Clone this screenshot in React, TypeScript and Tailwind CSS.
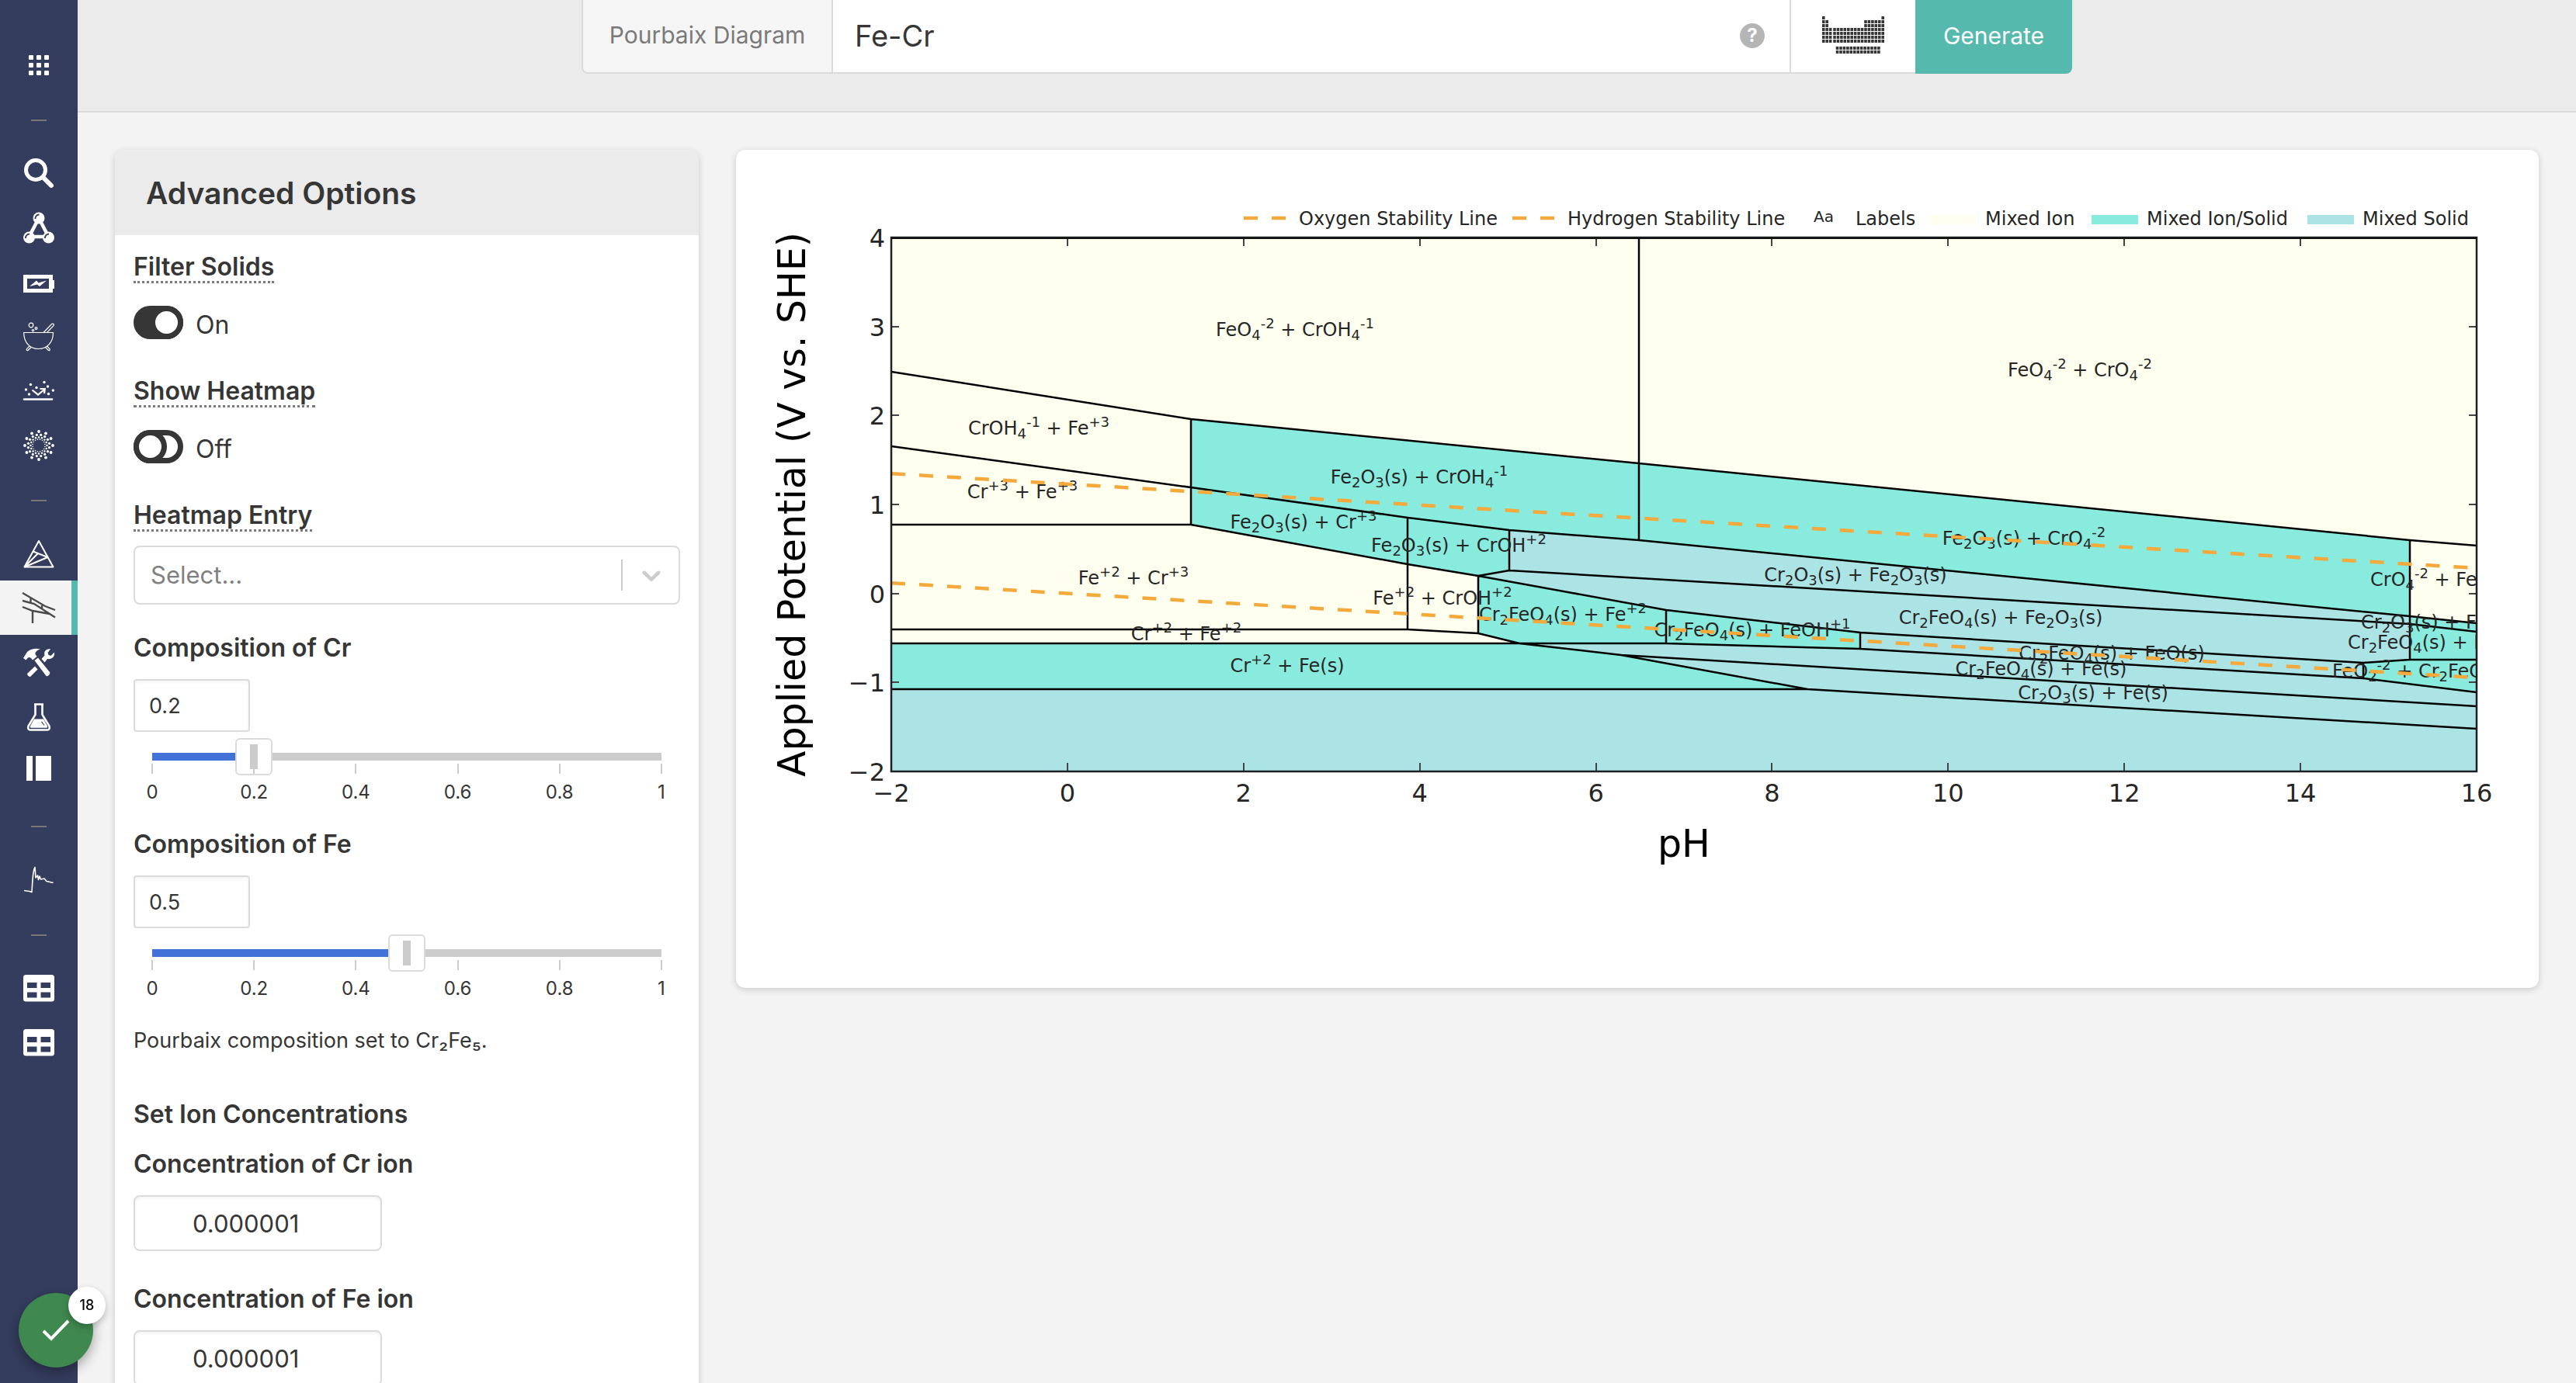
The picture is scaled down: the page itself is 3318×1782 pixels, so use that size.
import React, { useState } from "react";

/* ---------- sidebar icons (40 x 40 box) ---------- */

const svgProps = {
  width: 40,
  height: 40,
  viewBox: "0 0 40 40",
  fill: "none",
  stroke: "currentColor",
  "aria-hidden": true,
  overflow: "visible",
} as const;

const GridIcon = () => (
  <svg {...svgProps} stroke="none" fill="currentColor">
    {[0, 1, 2].map((r) =>
      [0, 1, 2].map((c) => <rect key={`${r}${c}`} x={7 + c * 10} y={8 + r * 10} width="6" height="6" rx="1" />)
    )}
  </svg>
);

const SearchIcon = () => (
  <svg {...svgProps}>
    <circle cx="16" cy="16" r="12.500" strokeWidth="5" />
    <path d="M25.500 25.500 L36 36" strokeWidth="6" strokeLinecap="round" />
  </svg>
);

const MoleculeIcon = () => (
  <svg {...svgProps}>
    <path d="M20 8 L7.500 32 H32.500 Z" strokeWidth="4.500" />
    <circle cx="20" cy="8" r="7.500" fill="currentColor" stroke="none" />
    <circle cx="7.500" cy="33" r="7.500" fill="currentColor" stroke="none" />
    <circle cx="32.500" cy="33" r="7.500" fill="currentColor" stroke="none" />
    <path d="M15.500 9 a5 5 0 0 1 5 -5.500 M3 34 a5 5 0 0 1 5 -5.500 M28 34 a5 5 0 0 1 5 -5.500" stroke="#353d5e" strokeWidth="1.800" />
  </svg>
);

const BatteryIcon = () => (
  <svg {...svgProps}>
    <rect x="2.500" y="13.500" width="33" height="18" strokeWidth="5" />
    <rect x="37" y="18" width="3" height="11" fill="currentColor" stroke="none" />
    <path d="M8 26 L17 18.500 L19.500 21.500 L30 18.500 L21 26 L18 23.500 Z" fill="currentColor" stroke="none" />
  </svg>
);

const MortarIcon = () => (
  <svg {...svgProps} strokeWidth="1.200">
    <path d="M.7 15.500 H38.500 C38.500 28 31 36.500 19.500 36.500 C8 36.500 .7 28 .7 15.500 Z" />
    <path d="M26 15.500 L36.500 4.500 C38 3.500 40.500 5 39 6.700 L30.500 15.500" />
    <path d="M8 33 L4.500 36.500 C3.500 38.500 5.500 39 6.500 38 L10 34.500 M30.500 33 L34 36.500 C35 38.500 33 39 32 38 L28.500 34.500" />
    <circle cx="10" cy="6" r="2.800" />
    <circle cx="16.500" cy="10" r="1.400" />
    <circle cx="12.500" cy="12.800" r="1.200" />
  </svg>
);

const ScatterIcon = () => (
  <svg {...svgProps}>
    {[[3.5, 19], [9.5, 12.5], [7.5, 25], [17, 16.5], [27, 9.5], [31.5, 15], [38.3, 20], [32.5, 24.5]].map(([x, y]) => (
      <circle key={x} cx={x} cy={y} r="1.700" fill="currentColor" stroke="none" />
    ))}
    <path d="M11.500 19.500 L19 25.500 L27 19" strokeWidth="2.200" />
    <path d="M21.500 18 H27.800 L27 24" strokeWidth="2.200" />
    <path d="M1 31.500 H37" strokeWidth="2.600" strokeLinecap="round" />
  </svg>
);

const RingIcon = () => {
  const rings = [
    { r: 18, n: 12, d: 1.9 },
    { r: 13.8, n: 16, d: 1.6 },
    { r: 10.5, n: 16, d: 1.2 },
    { r: 8, n: 16, d: 0.8 },
  ];
  return (
    <svg {...svgProps} fill="currentColor" stroke="none">
      {rings.map((g, k) =>
        Array.from({ length: g.n }, (_, i) => {
          const a = ((i + (k % 2) * 0.5) / g.n) * Math.PI * 2;
          return <circle key={`${k}-${i}`} cx={20 + g.r * Math.cos(a)} cy={21 + g.r * Math.sin(a)} r={g.d} />;
        })
      )}
    </svg>
  );
};

const PhaseIcon = () => (
  <svg {...svgProps} strokeWidth="2" strokeLinejoin="round">
    <path d="M20 4 L38.500 37.500 H1.500 Z" />
    <path d="M12.500 17.500 L31.500 25 M1.500 37.500 L19 20 M1.500 37.500 L31.500 25" />
  </svg>
);

const PourbaixIcon = () => (
  <svg {...svgProps} strokeWidth="2.400">
    <path d="M-1 1 L28 18 L41 23 M-1 11 L14 15 L41 32.500 M-1 19 L12 24 L34 28 M9.500 7 V14 M24 17 V21 M12 24 V40" />
  </svg>
);

const ToolsIcon = () => (
  <svg {...svgProps} viewBox="0 -1 40 40" fill="currentColor" stroke="none">
    <path d="M0 14 L5 6 C10 2 16 1 22 2.500 C17 4 15 6.500 15.500 9 L17.500 12 L12 16.500 C10 13 7 12 5 14.500 L3.500 16.500 Z" />
    <path d="M14.500 17 L19 13.500 L34 32 C35 34.500 32 38 29.500 37 Z" />
    <path d="M40 6.500 L35.500 11 L32.500 10 L31.500 7 L35 2.500 C29.500 1.500 26 5.500 27.500 10.500 L23.500 15 L27.500 19.500 L31 15 C36.500 16 41 12 40 6.500 Z" />
    <path d="M15 24.500 L5 34 C5 36 7 38 9 38 L18.500 28.500 Z" />
  </svg>
);

const FlaskIcon = () => (
  <svg {...svgProps} viewBox="0 -1 40 40" strokeWidth="2.600">
    <path d="M14 3.500 H26 M15.500 4 V17 L6.500 31.500 C5.500 35 7 36.500 9 36.500 H31 C33 36.500 34.500 35 33.500 31.500 L24.500 17 V4" />
    <path d="M14 22.500 H26 L31 31.500 C31.500 33 31 33.700 30 33.700 H10 C9 33.700 8.500 33 9 31.500 Z" fill="currentColor" stroke="none" />
    <path d="M23.500 26 L27 30.500" stroke="#353d5e" strokeWidth="1.200" />
  </svg>
);

const BookIcon = () => (
  <svg {...svgProps} fill="currentColor" stroke="none">
    <rect x="4" y="1" width="8" height="32" />
    <rect x="16" y="1" width="20" height="32" />
  </svg>
);

const SpectrumIcon = () => (
  <svg {...svgProps} strokeWidth="1.600" strokeLinejoin="round">
    <path d="M1 34.500 L8 35.500 L11 36.500 C12 22 12 9 15 4.500 L16 18 L18.500 15 L19.500 20.500 L21 16 L22.500 20 L27 19 L30 22.500 L38.500 24.500" />
  </svg>
);

const TableIcon = () => (
  <svg {...svgProps} fill="currentColor" stroke="none">
    <path
      fillRule="evenodd"
      d="M3.500 3 H36.500 Q40 3 40 6.500 V34 Q40 37.500 36.500 37.500 H3.500 Q0 37.500 0 34 V6.500 Q0 3 3.500 3 Z M5 13 V20 H17.500 V13 Z M22.500 13 V20 H35 V13 Z M5 25.500 V32.500 H17.500 V25.500 Z M22.500 25.500 V32.500 H35 V25.500 Z"
    />
  </svg>
);

type NavItem = { label: string; icon?: () => React.ReactElement; active?: boolean };

const nav: NavItem[] = [
  { label: "Apps", icon: GridIcon },
  { label: "" },
  { label: "Materials Explorer", icon: SearchIcon },
  { label: "Molecules Explorer", icon: MoleculeIcon },
  { label: "Battery Explorer", icon: BatteryIcon },
  { label: "Synthesis Explorer", icon: MortarIcon },
  { label: "Catalysis Explorer", icon: ScatterIcon },
  { label: "MOF Explorer", icon: RingIcon },
  { label: "" },
  { label: "Phase Diagram", icon: PhaseIcon },
  { label: "Pourbaix Diagram", icon: PourbaixIcon, active: true },
  { label: "Crystal Toolkit", icon: ToolsIcon },
  { label: "Reaction Calculator", icon: FlaskIcon },
  { label: "Interface Reactions", icon: BookIcon },
  { label: "" },
  { label: "X-ray Absorption Spectra", icon: SpectrumIcon },
  { label: "" },
  { label: "Contributed Data", icon: TableIcon },
  { label: "Contribution Projects", icon: TableIcon },
];

function Sidebar() {
  return (
    <nav aria-label="Apps" className="flex w-[100px] shrink-0 flex-col bg-[#353d5e] pt-12 text-white">
      {nav.map((item, i) =>
        item.icon ? (
          <a
            key={i}
            href="#"
            aria-label={item.label}
            className={
              item.active
                ? "flex h-[70px] items-center justify-center border-r-8 border-[#55b9ad] bg-[#f3f3f3] pl-2 text-[#4a4a4a]"
                : "flex h-[70px] items-center justify-center"
            }
          >
            <item.icon />
          </a>
        ) : (
          <div key={i} className="flex h-[70px] items-center justify-center pt-1">
            <span className="h-0.5 w-5 bg-[#777777]" />
          </div>
        )
      )}
    </nav>
  );
}

/* ---------- search bar ---------- */

function PeriodicIcon() {
  const cells: [number, number][] = [];
  for (let r = 0; r < 7; r++)
    for (let c = 0; c < 18; c++) {
      const filled = r === 0 ? c === 0 || c === 17 : r < 3 ? c < 2 || c > 11 : true;
      if (filled) cells.push([c < 3 ? c * 5 : c * 5 + 1, r * 5]);
    }
  for (let c = 4; c < 17; c++) cells.push([c * 5, 39], [c * 5, 44]);
  return (
    <svg width="80" height="48" viewBox="0 0 90 48" preserveAspectRatio="none" fill="#363636" aria-hidden="true">
      {cells.map(([x, y]) => (
        <rect key={`${x}-${y}`} x={x} y={y} width="4" height="4" />
      ))}
    </svg>
  );
}

function SearchBar() {
  return (
    <header className="flex h-[145px] shrink-0 items-start justify-center border-b-2 border-[#dbdbdb] bg-[#ebebeb]">
      <form className="flex h-[95px] w-full max-w-[1920px]" onSubmit={(e) => e.preventDefault()}>
        <label
          htmlFor="system"
          className="flex w-[324px] items-center justify-center rounded-bl-lg border-r-2 border-b-2 border-l-2 border-[#dbdbdb] bg-[#f5f5f5] pb-0.5 text-[30px] text-[#7a7a7a]"
        >
          Pourbaix Diagram
        </label>
        <div className="flex min-w-0 flex-1 items-center border-b-2 border-[#dbdbdb] bg-white pr-8 pl-7">
          <input id="system" defaultValue="Fe-Cr" className="min-w-0 flex-1 pb-0.5 text-[38px] leading-[48px] text-[#363636] outline-none" />
          <button type="button" aria-label="Help" className="mb-0.5 flex size-8 items-center justify-center rounded-full bg-[#b5b5b5] text-2xl font-bold text-white">
            ?
          </button>
        </div>
        <button type="button" aria-label="Periodic table" className="flex w-[162px] items-center justify-center border-b-2 border-l-2 border-[#dbdbdb] bg-white pb-1">
          <PeriodicIcon />
        </button>
        <button type="submit" className="w-[202px] rounded-br-lg bg-[#55b9ad] pb-0.5 text-[30px] text-white">
          Generate
        </button>
      </form>
    </header>
  );
}

/* ---------- options panel ---------- */

function HintLabel({ htmlFor, children }: { htmlFor: string; children: React.ReactNode }) {
  return (
    <label htmlFor={htmlFor} className="self-start border-b-[3px] border-dotted border-[#7a7a7a] text-[32px] leading-9 font-semibold">
      {children}
    </label>
  );
}

function Toggle({ id, title, initial }: { id: string; title: string; initial: boolean }) {
  const [on, setOn] = useState(initial);
  return (
    <div className="mb-12 flex flex-col">
      <HintLabel htmlFor={id}>{title}</HintLabel>
      <div className="mt-7 flex h-[45px] items-center gap-4">
        <input
          id={id}
          type="checkbox"
          checked={on}
          onChange={() => setOn(!on)}
          className="h-[43px] w-16 appearance-none rounded-full border-[7px] border-[#363636] bg-white before:-m-[7px] before:block before:size-[43px] before:rounded-full before:border-[7px] before:border-[#363636] before:bg-white before:content-[''] checked:bg-[#363636] checked:before:ml-[14px]"
        />
        <span className="pt-1.5 text-[32px] leading-9">{on ? "On" : "Off"}</span>
      </div>
    </div>
  );
}

function Composition({ element, initial }: { element: string; initial: string }) {
  const [value, setValue] = useState(initial);
  const id = `composition-${element}`;
  return (
    <div className="mb-[35px] flex flex-col">
      <label htmlFor={id} className="text-[32px] leading-9 font-semibold">
        Composition of {element}
      </label>
      <input
        id={id}
        value={value}
        onChange={(e) => setValue(e.target.value)}
        className="mt-[22px] h-[68px] w-[150px] rounded border-2 border-[#dbdbdb] px-[18px] text-[27px] shadow-[inset_0_2px_4px_rgba(10,10,10,0.05)]"
      />
      <input
        type="range"
        aria-label={`Composition of ${element}`}
        min="0"
        max="1"
        step="0.01"
        value={value}
        onChange={(e) => setValue(e.target.value)}
        style={{ "--fill": `${Number(value) * 100}%` } as React.CSSProperties}
        className="mt-2 h-12 w-full appearance-none bg-[linear-gradient(to_right,#4272d7_var(--fill),#cccccc_var(--fill))] bg-[length:calc(100%-48px)_10px] bg-center bg-no-repeat [&::-webkit-slider-thumb]:size-12 [&::-webkit-slider-thumb]:appearance-none [&::-webkit-slider-thumb]:rounded-md [&::-webkit-slider-thumb]:border-2 [&::-webkit-slider-thumb]:border-[#dbdbdb] [&::-webkit-slider-thumb]:bg-white [&::-webkit-slider-thumb]:bg-[linear-gradient(#cccccc,#cccccc)] [&::-webkit-slider-thumb]:bg-[length:10px_32px] [&::-webkit-slider-thumb]:bg-center [&::-webkit-slider-thumb]:bg-no-repeat"
      />
      <div className="-mt-[15px] flex justify-between" aria-hidden="true">
        {["0", "0.2", "0.4", "0.6", "0.8", "1"].map((t) => (
          <div key={t} className="flex w-12 flex-col items-center">
            <span className="h-[13px] w-0.5 bg-[#cccccc]" />
            <span className="mt-2.5 text-2xl leading-7">{t}</span>
          </div>
        ))}
      </div>
    </div>
  );
}

function Concentration({ element }: { element: string }) {
  const id = `concentration-${element}`;
  return (
    <div className="mb-11 flex flex-col">
      <label htmlFor={id} className="text-[32px] leading-9 font-semibold">
        Concentration of {element} ion
      </label>
      <input
        id={id}
        defaultValue="0.000001"
        className="mt-[22px] h-[72px] w-80 rounded-lg border-2 border-[#dbdbdb] pl-[74px] text-[31px] shadow-[inset_0_2px_4px_rgba(10,10,10,0.05)]"
      />
    </div>
  );
}

function Options() {
  return (
    <section className="w-[752px] shrink-0 rounded-t-xl bg-white shadow-[0_2px_8px_rgba(10,10,10,0.18)]">
      <h2 className="flex h-[110px] items-center rounded-t-xl bg-[#ebebeb] px-10 pt-0.5 text-[39px] font-semibold">Advanced Options</h2>
      <div className="flex flex-col px-6 pt-[23px]">
        <Toggle id="filter-solids" title="Filter Solids" initial={true} />
        <Toggle id="show-heatmap" title="Show Heatmap" initial={false} />
        <HintLabel htmlFor="heatmap-entry">Heatmap Entry</HintLabel>
        <div className="relative mt-[18px] mb-[38px]">
          <select id="heatmap-entry" className="h-[76px] w-full appearance-none rounded-lg border-2 border-[#dbdbdb] bg-white pl-5 text-[31px] text-[#808080]">
            <option>Select...</option>
          </select>
          <div className="pointer-events-none absolute inset-y-0 right-0 flex items-center">
            <span className="h-10 w-0.5 bg-[#cccccc]" />
            <svg className="mx-[17px]" width="40" height="40" viewBox="0 0 20 20" fill="#cccccc" aria-hidden="true">
              <path d="M4.516 7.548c0.436-0.446 1.043-0.481 1.576 0l3.908 3.747 3.908-3.747c0.533-0.481 1.141-0.446 1.574 0 0.436 0.445 0.408 1.197 0 1.615-0.406 0.418-4.695 4.502-4.695 4.502-0.217 0.223-0.502 0.335-0.787 0.335s-0.570-0.112-0.789-0.335c0 0-4.287-4.084-4.695-4.502s-0.436-1.170 0-1.615z" />
            </svg>
          </div>
        </div>
        <Composition element="Cr" initial="0.2" />
        <Composition element="Fe" initial="0.5" />
        <p className="mb-[59px] text-[27px] leading-9">Pourbaix composition set to Cr₂Fe₅.</p>
        <h3 className="mb-7 text-[32px] leading-9 font-semibold">Set Ion Concentrations</h3>
        <Concentration element="Cr" />
        <Concentration element="Fe" />
      </div>
    </section>
  );
}

/* ---------- diagram ---------- */

const ION = "#fffff0";
const ION_SOLID = "#88ebdd";
const SOLID = "#ace3e5";

const LEFT = 1148;
const RIGHT = 3190;
const TOP = 306;
const BOTTOM = 994;
const sx = (ph: number) => LEFT + ((ph + 2) * (RIGHT - LEFT)) / 18;
const sy = (v: number) => BOTTOM - ((v + 2) * (BOTTOM - TOP)) / 6;

const regions = [
  { fill: SOLID, d: "M1944 683 L2111 696 L3104 794 V850 L3044 854 V874 L3190 892 V994 H1148 V888 H2328 L2088 844 L1957 829 H2146 L2396 836 V815 L2146 786 L1904 742 L1944 735 Z" },
  { fill: ION_SOLID, d: "M1534 540 L2111 597 L3104 696 V794 L2111 696 L1944 683 V735 L1904 742 L1813 727 L1534 676 Z" },
  { fill: ION_SOLID, d: "M1148 829 H1957 L2088 844 L2328 888 H1148 Z" },
  { fill: ION_SOLID, d: "M1904 742 L2146 786 L2396 815 V836 L2146 829 H1957 L1904 816 Z" },
  { fill: ION_SOLID, d: "M3104 794 L3190 803 V850 H3104 Z" },
  { fill: ION_SOLID, d: "M3044 854 L3104 850 H3190 V892 L3044 874 Z" },
];

const borders = [
  "M1148 479 L1534 540 L2111 597 L3104 696 L3190 703",
  "M1148 575 L1534 628 L1813 667 L1944 683 L2111 696 L3104 794 L3190 803",
  "M1148 676 H1534 L1813 727 L1904 742 L2146 786 L2396 815 L3044 854 L3104 850 H3190",
  "M1904 742 L1944 735 L3104 804 L3190 814",
  "M1148 811 H1813 L1904 816 L1957 829 L2088 844 L2328 888 L3190 939",
  "M2088 844 L3190 910",
  "M1148 829 H2146 L2396 836 L3044 874 L3190 892",
  "M1148 888 H2328",
  "M2111 306 V696",
  "M1534 540 V676",
  "M1813 667 V811",
  "M1944 683 V735",
  "M1904 742 V816",
  "M2146 786 V829",
  "M2396 815 V836",
  "M3044 854 V874",
  "M3104 696 V850",
];

/* "_" starts a subscript, "^" a superscript; each runs to the next "|" */
const labels: { t: string; x: number; y: number; start?: boolean }[] = [
  { t: "FeO_4|^-2| + CrOH_4|^-1|", x: 1668, y: 433 },
  { t: "CrOH_4|^-1| + Fe^+3|", x: 1338, y: 560 },
  { t: "Cr^+3| + Fe^+3|", x: 1317, y: 642 },
  { t: "Fe_2|O_3|(s) + Cr^+3|", x: 1679, y: 681 },
  { t: "Fe_2|O_3|(s) + CrOH_4|^-1|", x: 1828, y: 623 },
  { t: "Fe_2|O_3|(s) + CrOH^+2|", x: 1879, y: 711 },
  { t: "FeO_4|^-2| + CrO_4|^-2|", x: 2679, y: 485 },
  { t: "Fe^+2| + Cr^+3|", x: 1460, y: 753 },
  { t: "Cr^+2| + Fe^+2|", x: 1528, y: 825 },
  { t: "Cr^+2| + Fe(s)", x: 1658, y: 866 },
  { t: "Fe^+2| + CrOH^+2|", x: 1858, y: 779 },
  { t: "Cr_2|FeO_4|(s) + Fe^+2|", x: 2013, y: 800 },
  { t: "Cr_2|FeO_4|(s) + FeOH^+1|", x: 2257, y: 820 },
  { t: "Cr_2|O_3|(s) + Fe_2|O_3|(s)", x: 2390, y: 749 },
  { t: "Cr_2|FeO_4|(s) + Fe_2|O_3|(s)", x: 2577, y: 804 },
  { t: "Fe_2|O_3|(s) + CrO_4|^-2|", x: 2607, y: 702 },
  { t: "Cr_2|FeO_4|(s) + FeO(s)", x: 2720, y: 850 },
  { t: "Cr_2|FeO_4|(s) + Fe(s)", x: 2629, y: 870 },
  { t: "Cr_2|O_3|(s) + Fe(s)", x: 2696, y: 901 },
  { t: "CrO_4|^-2| + FeO_2|^-2|", x: 3053, y: 755, start: true },
  { t: "Cr_2|O_3|(s) + FeO_2|^-2|", x: 3041, y: 810, start: true },
  { t: "Cr_2|FeO_4|(s) + FeO_2|^-2|", x: 3024, y: 836, start: true },
  { t: "FeO_2|^-2| + Cr_2|FeO_4|(s)", x: 3004, y: 873, start: true },
];

function Formula({ t, x, y, start }: { t: string; x: number; y: number; start?: boolean }) {
  const parts = t.match(/[_^][^|]*\||[^_^|]+/g) ?? [];
  let shift = 0;
  return (
    <text x={x} y={y} textAnchor={start ? "start" : "middle"} fontSize="24" className="whitespace-pre">
      {parts.map((p, i) => {
        const level = p[0] === "_" ? 5 : p[0] === "^" ? -10 : 0;
        const dy = level - shift;
        shift = level;
        return (
          <tspan key={i} dy={dy} fontSize={level ? 18 : 24}>
            {level ? p.slice(1, -1) : p}
          </tspan>
        );
      })}
    </text>
  );
}

const legend = [
  { text: "Oxygen Stability Line", x: 1672, swatch: 1602, kind: "dash" },
  { text: "Hydrogen Stability Line", x: 2018, swatch: 1948, kind: "dash" },
  { text: "Labels", x: 2389, swatch: 2336, kind: "text" },
  { text: "Mixed Ion", x: 2556, swatch: 2486, kind: ION },
  { text: "Mixed Ion/Solid", x: 2764, swatch: 2694, kind: ION_SOLID },
  { text: "Mixed Solid", x: 3042, swatch: 2972, kind: SOLID },
];

function Diagram() {
  const xt = [-2, 0, 2, 4, 6, 8, 10, 12, 14, 16];
  const yt = [-2, -1, 0, 1, 2, 3, 4];
  const fmt = (n: number) => String(n).replace("-", "−");
  return (
    <section className="min-w-0 flex-1 self-start rounded-xl bg-white shadow-[0_2px_8px_rgba(10,10,10,0.18)]">
      <svg
        viewBox="948 193 2322 1080"
        className="block h-auto w-full font-['Verdana','DejaVu_Sans',sans-serif]"
        fill="#262626"
        role="img"
        aria-label="Pourbaix diagram of Fe-Cr"
      >
        <clipPath id="plot">
          <rect x={LEFT} y={TOP} width={RIGHT - LEFT} height={BOTTOM - TOP} />
        </clipPath>
        <g clipPath="url(#plot)">
          <rect x={LEFT} y={TOP} width={RIGHT - LEFT} height={BOTTOM - TOP} fill={ION} />
          {regions.map((r, i) => (
            <path key={i} d={r.d} fill={r.fill} />
          ))}
          <path d={borders.join(" ")} fill="none" stroke="#000" strokeWidth="2.500" />
          {labels.map((l) => (
            <Formula key={l.t} {...l} />
          ))}
          <g stroke="#f3a93c" strokeWidth="4.500" strokeDasharray="18 18">
            <line x1={sx(-2)} y1={sy(1.347)} x2={sx(16)} y2={sy(0.285)} />
            <line x1={sx(-2)} y1={sy(0.118)} x2={sx(16)} y2={sy(-0.946)} />
          </g>
        </g>
        <g stroke="#444" strokeWidth="2">
          {xt.slice(1, -1).map((t) => (
            <path key={t} d={`M${Math.round(sx(t))} ${TOP} v11 M${Math.round(sx(t))} ${BOTTOM} v-11`} />
          ))}
          {yt.slice(1, -1).map((t) => (
            <path key={t} d={`M${LEFT} ${Math.round(sy(t))} h10 M${RIGHT} ${Math.round(sy(t))} h-10`} />
          ))}
        </g>
        <rect x={LEFT} y={TOP} width={RIGHT - LEFT} height={BOTTOM - TOP} fill="none" stroke="#1c2023" strokeWidth="2.500" />
        <path d={`M${LEFT} ${TOP + 1} H${RIGHT}`} stroke="#111" strokeWidth="2" />

        <g fontSize="32">
          {xt.map((t) => (
            <text key={t} x={sx(t)} y="1033" textAnchor="middle">
              {fmt(t)}
            </text>
          ))}
          {yt.map((t) => (
            <text key={t} x="1140" y={sy(t) + 12} textAnchor="end">
              {fmt(t)}
            </text>
          ))}
        </g>
        <g fontSize="49" fill="#000" textAnchor="middle">
          <text x="2169" y="1104">
            pH
          </text>
          <text transform="translate(1037 650) rotate(-90)">Applied Potential (V vs. SHE)</text>
        </g>

        <g fontSize="24">
          {legend.map((l) => (
            <g key={l.text}>
              {l.kind === "dash" ? (
                <line x1={l.swatch} x2={l.swatch + 60} y1="281" y2="281" stroke="#f3a93c" strokeWidth="4.500" strokeDasharray="18 18" />
              ) : l.kind === "text" ? (
                <text x={l.swatch} y="286" fontSize="20">
                  Aa
                </text>
              ) : (
                <rect x={l.swatch} y="277" width="60" height="12" fill={l.kind} />
              )}
              <text x={l.x + 1} y="290">
                {l.text}
              </text>
            </g>
          ))}
        </g>
      </svg>
    </section>
  );
}

/* ---------- page ---------- */

export default function App() {
  return (
    <div className="flex h-screen overflow-hidden bg-[#f3f3f3] font-[Inter,sans-serif] text-[#363636]">
      <Sidebar />
      <div className="flex min-w-0 flex-1 flex-col">
        <SearchBar />
        <main className="flex gap-12 px-12 pt-12">
          <Options />
          <Diagram />
        </main>
      </div>
      <div className="fixed bottom-5 left-6">
        <button
          type="button"
          aria-label="Checklist, 18 items"
          className="flex size-24 items-center justify-center rounded-full bg-[#3f884f] text-white shadow-[0_6px_16px_rgba(0,0,0,0.35)]"
        >
          <svg width="36" height="28" viewBox="0 0 36 28" fill="none" stroke="currentColor" strokeWidth="4" aria-hidden="true">
            <path d="M2 15 L12 25 L34 2" />
          </svg>
        </button>
        <span className="absolute -top-2 -right-4 flex size-12 items-center justify-center rounded-full bg-white text-lg font-medium text-black shadow-[0_4px_10px_rgba(0,0,0,0.25)]">
          18
        </span>
      </div>
    </div>
  );
}
